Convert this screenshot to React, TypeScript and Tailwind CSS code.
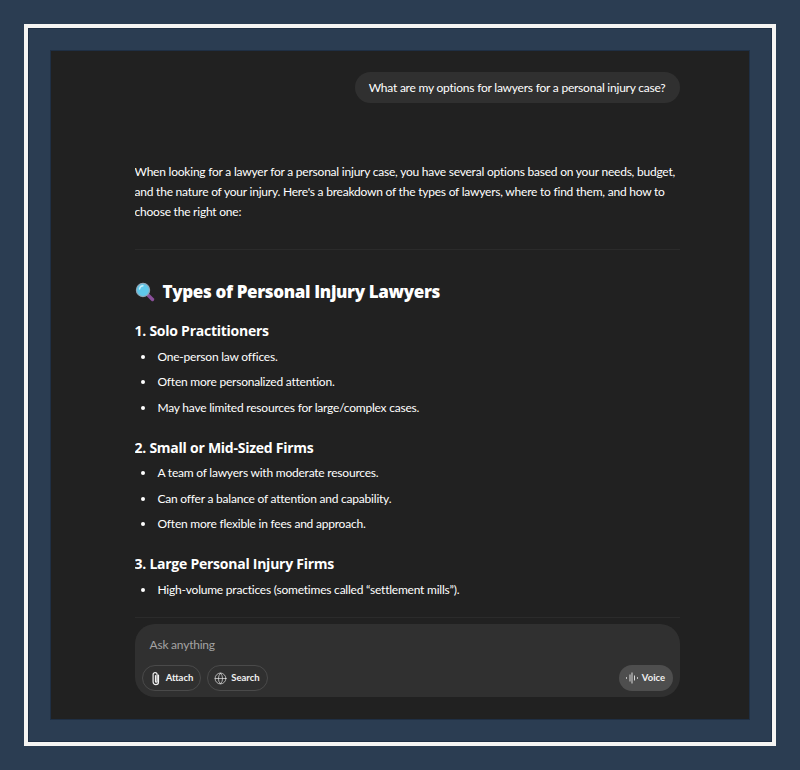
import { Globe } from "lucide-react";

const font = { fontFamily: "Lato, 'Open Sans', sans-serif" };
const headFont = { fontFamily: "'Open Sans', 'Noto Sans', sans-serif" };

const sections = [
  {
    title: "1. Solo Practitioners",
    items: ["One-person law offices.", "Often more personalized attention.", "May have limited resources for large/complex cases."],
  },
  {
    title: "2. Small or Mid-Sized Firms",
    items: ["A team of lawyers with moderate resources.", "Can offer a balance of attention and capability.", "Often more flexible in fees and approach."],
  },
  {
    title: "3. Large Personal Injury Firms",
    items: ["High-volume practices (sometimes called “settlement mills”)."],
  },
];

function Magnifier() {
  return (
    <svg width="20" height="20" viewBox="0 0 20 20" className="shrink-0">
      <path d="M11.5 11.5 L17.5 17.5" stroke="#8a4f9a" strokeWidth="3.4" strokeLinecap="round" />
      <circle cx="8" cy="8" r="6.6" fill="#5fc8ea" stroke="#8fa6b8" strokeWidth="1.2" />
      <path d="M4.5 7 A4 4 0 0 1 8 3.8" stroke="#c4eefa" strokeWidth="1.4" fill="none" strokeLinecap="round" />
    </svg>
  );
}

function ClipIcon() {
  return (
    <svg width="14" height="15" viewBox="0 0 14 15" fill="none" stroke="currentColor" strokeWidth="1.2" strokeLinecap="round">
      <path d="M9.5 4v7a2.7 2.7 0 0 1-5.4 0V3.6a2 2 0 0 1 4 0v6.8a.8.8 0 0 1-1.6 0V4.5" />
    </svg>
  );
}

function VoiceIcon() {
  return (
    <svg width="12" height="12" viewBox="0 0 12 12" className="text-[#d8d8d8]">
      <path d="M0.5 5.2v1.6M4 2.5v7M6 0.5v11M8.5 3.5v5M11.5 5.2v1.6" stroke="currentColor" strokeWidth="1" />
    </svg>
  );
}

export default function App() {
  return (
    <div className="w-[800px] h-[770px] bg-[#2b3d52] p-6 overflow-hidden" style={font}>
      <div className="h-[722px] border-4 border-[#f5f5f3] outline outline-1 outline-[#1f2f44] -outline-offset-[5px] p-[22px]">
        <div className="h-[670px] bg-[#212121] border border-[#1f2f44] flex flex-col items-center pl-[14px] overflow-hidden">
          <div className="w-[545px] flex-1 min-h-0 overflow-hidden text-white">
            <div className="flex justify-end mt-[21px]">
              <div className="h-[31px] px-[14px] rounded-full bg-[#303030] text-[12px] leading-[31px] tracking-[-0.22px] text-white">
                What are my options for lawyers for a personal injury case?
              </div>
            </div>
            <p className="mt-[59px] text-[12px] leading-[20px] tracking-[-0.22px] text-white">
              When looking for a lawyer for a personal injury case, you have several options based on your needs, budget, and the nature of your injury. Here's a breakdown of the types of lawyers, where to find them, and how to choose the right one:
            </p>
            <div className="mt-[27px] border-t border-[#2b2b2b]" />
            <h2 className="mt-[29px] flex items-center gap-[8px] text-[17px] leading-[26px] font-extrabold tracking-[-0.35px]" style={headFont}>
              <Magnifier />
              Types of Personal Injury Lawyers
            </h2>
            {sections.map((s) => (
              <div key={s.title}>
                <h3 className="mt-[15px] text-[14px] leading-[22px] font-bold tracking-[-0.25px]" style={headFont}>{s.title}</h3>
                <ul className="mt-[3px] mb-[17.5px] flex flex-col gap-[2.5px]">
                  {s.items.map((item) => (
                    <li key={item} className="flex items-center h-[23px] text-[12px] tracking-[-0.22px] text-white">
                      <span className="w-[4px] h-[4px] rounded-full bg-white ml-[6px] mr-[13px]" />
                      {item}
                    </li>
                  ))}
                </ul>
              </div>
            ))}
          </div>
          <div className="w-[545px] border-t border-[#2b2b2b] pt-[6px] pb-[22px]">
            <div className="h-[73px] rounded-[20px] bg-[#303030] flex flex-col justify-between pl-[7px] pr-[7px] pb-[6px]">
              <div className="pl-[8px] pt-[13px] text-[12px] leading-[16px] tracking-[-0.22px] text-[#a3a3a3]">Ask anything</div>
              <div className="flex items-center gap-[6px]">
                <button className="h-[26px] w-[59px] justify-center rounded-full border border-[#4a4a4a] flex items-center gap-[3px] text-[9.5px] font-bold text-[#f0f0f0]">
                  <ClipIcon />
                  Attach
                </button>
                <button className="h-[26px] w-[61px] justify-center rounded-full border border-[#4a4a4a] flex items-center gap-[4px] text-[9.5px] font-bold text-[#f0f0f0]">
                  <Globe size={13} strokeWidth={1.2} />
                  Search
                </button>
                <button className="ml-auto h-[26px] w-[54px] justify-center rounded-full bg-[#4e4e4e] flex items-center gap-[4px] text-[9.5px] font-bold text-[#f0f0f0]">
                  <VoiceIcon />
                  Voice
                </button>
              </div>
            </div>
          </div>
        </div>
      </div>
    </div>
  );
}
